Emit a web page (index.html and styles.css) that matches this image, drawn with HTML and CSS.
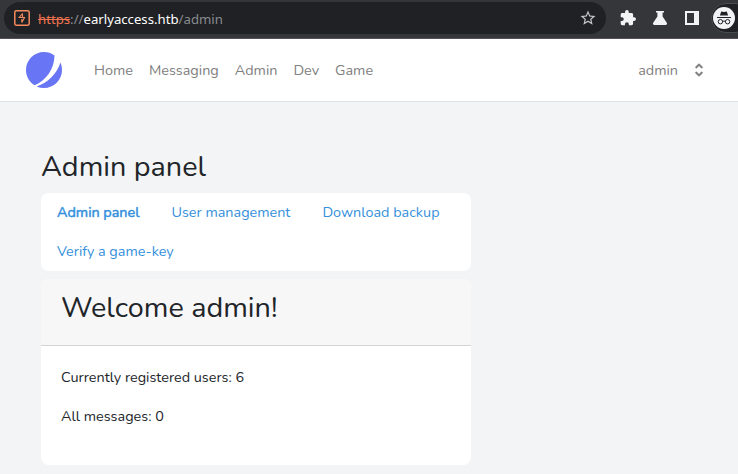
FILE: index.html
```html
<!DOCTYPE html>
<html lang="en">
<head>
<meta charset="utf-8">
<title>Admin panel</title>
<link rel="stylesheet" href="styles.css">
</head>
<body>
<div class="toolbar">
  <div class="omnibox">
    <svg class="burp" width="16" height="16" viewBox="0 0 16 16"><rect x="0.8" y="0.8" width="14.4" height="14.4" rx="1.4" fill="none" stroke="#f48b5e" stroke-width="1.500"/><path d="M8.500 3.500L5.200 7.500h5.300L7.800 12.500M8.500 3.500v4M7.800 12.500V9" fill="none" stroke="#f48b5e" stroke-width="1.100"/></svg>
    <div class="url"><span class="scheme">https</span><span class="dim">://</span>earlyaccess.htb<span class="dim">/admin</span></div>
    <svg class="star" width="18" height="18" viewBox="0 0 24 24"><path fill="#c4c7cb" d="M22 9.240l-7.190-.62L12 2 9.190 8.630 2 9.240l5.460 4.730L5.820 21 12 17.270 18.180 21l-1.630-7.030L22 9.240zM12 15.400l-3.760 2.270 1-4.280-3.320-2.880 4.380-.38L12 6.100l1.710 4.040 4.380.38-3.320 2.880 1 4.280L12 15.400z"/></svg>
  </div>
  <div class="actions">
    <svg width="16" height="16" viewBox="1 1 22 22"><path fill="#f1f3f4" d="M20.500 11H19V7c0-1.100-.9-2-2-2h-4V3.500a2.500 2.500 0 0 0-5 0V5H4c-1.100 0-2 .9-2 2v3.800h1.500a2.700 2.700 0 0 1 0 5.400H2V20c0 1.100.9 2 2 2h3.800v-1.500a2.700 2.700 0 0 1 5.400 0V22H17c1.100 0 2-.9 2-2v-4h1.500a2.500 2.500 0 0 0 0-5z"/></svg>
    <svg width="16" height="16" viewBox="0 0 16 16"><path fill="#f1f3f4" d="M4 1h8v1.500h-1.400v4l4.200 6.300c.6 1 0 2.200-1.200 2.200H2.400c-1.200 0-1.800-1.200-1.200-2.200l4.200-6.300v-4H4z"/></svg>
    <svg width="14" height="14" viewBox="0 0 14 14"><path fill="#f1f3f4" fill-rule="evenodd" d="M0 0h14v14H0zM2 2v10h7V2z"/></svg>
  </div>
  <div class="profile">
    <svg width="22" height="22" viewBox="0 0 22 22"><circle cx="11" cy="11" r="11" fill="#f1f3f4"/><path fill="#202124" d="M8.200 4.500l2.800.6 2.800-.6 1.300 4H6.900zM4 10h14v1H4z"/><g fill="none" stroke="#202124" stroke-width="1"><circle cx="7.400" cy="14.700" r="2.200"/><circle cx="14.600" cy="14.700" r="2.200"/><path d="M9.500 14.400q1.500-.8 3 0"/></g></svg>
  </div>
</div>
<nav class="nav">
  <svg class="logo" width="36" height="36" viewBox="0 0 48 48" fill="#6875f5"><path d="M11.395 44.428C4.557 40.198 0 32.632 0 24 0 10.745 10.745 0 24 0a23.891 23.891 0 0113.997 4.502c-.2 17.907-11.097 33.245-26.602 39.926z"/><path d="M14.134 45.885A23.914 23.914 0 0024 48c13.255 0 24-10.745 24-24 0-3.516-.756-6.856-2.115-9.866-4.659 15.143-16.608 27.092-31.750 31.751z"/></svg>
  <div class="links"><a>Home</a><a>Messaging</a><a>Admin</a><a>Dev</a><a>Game</a></div>
  <div class="user"><span>admin</span><svg width="18" height="18" viewBox="0 0 20 20"><path fill="#7f7f7f" stroke="#7f7f7f" stroke-width=".4" fill-rule="evenodd" d="M10 3a1 1 0 01.707.293l3 3a1 1 0 01-1.414 1.414L10 5.414 7.707 7.707a1 1 0 01-1.414-1.414l3-3A1 1 0 0110 3zm-3.707 9.293a1 1 0 011.414 0L10 14.586l2.293-2.293a1 1 0 011.414 1.414l-3 3a1 1 0 01-1.414 0l-3-3a1 1 0 010-1.414z"/></svg></div>
</nav>
<main>
  <h2>Admin panel</h2>
  <div class="tabs"><a class="active">Admin panel</a><a>User management</a><a>Download backup</a><a>Verify a game-key</a></div>
  <section class="card">
    <header><h2>Welcome admin!</h2></header>
    <div class="body"><p>Currently registered users: 6</p><p>All messages: 0</p></div>
  </section>
</main>
</body>
</html>
```
FILE: styles.css
```css
* { box-sizing: border-box; }
body { margin: 0; height: 474px; overflow: hidden; background: #f2f4f6; color: #212529; font: 14.4px/23px Nunito, Lato, sans-serif; }
svg { display: block; flex: none; }
.toolbar { height: 39px; background: #35363a; border-bottom: 1px solid #55515c; display: flex; align-items: flex-start; padding: 2px 0 0 4px; }
.omnibox { width: 602px; height: 32px; border-radius: 16px; background: #202124; display: flex; align-items: center; padding: 0 9px 0 10px; }
.url { flex: 1; margin-left: 8px; padding-top: 1px; color: #fff; font: 13.2px/20px "Noto Sans", sans-serif; white-space: nowrap; }
.scheme { color: #f07450; text-decoration: line-through; }
.dim { color: #888b90; }
.actions { height: 32px; display: flex; align-items: center; gap: 16px; margin-left: 14px; }
.actions svg:last-child { margin-left: 1px; }
.profile { width: 40px; height: 30px; margin: 1px -14px 0 12px; padding: 3px 0 0 1px; border: 1px solid #4b4c50; border-radius: 15px; background: #202124; flex: none; }
.nav { height: 63px; background: #fff; border-bottom: 1px solid #dee2e6; display: flex; align-items: center; padding: 0 30px 0 26px; color: #808080; }
.links { display: flex; gap: 16px; margin-left: 32px; }
.user { margin-left: auto; display: flex; align-items: center; gap: 12px; }
main { width: 430px; margin: 47px 0 0 41px; }
h2 { margin: 0; font-weight: 400; font-size: 28.800px; line-height: 35px; }
.tabs { height: 78px; margin-top: 9px; border-radius: 8px; background: #fff; color: #3490dc; display: flex; flex-wrap: wrap; align-content: flex-start; }
.tabs a { padding: 8px 16px; white-space: nowrap; }
.tabs .active { -webkit-text-stroke: .5px currentColor; }
.card { margin-top: 8px; height: 186px; border-radius: 8px; background: #fff; overflow: hidden; }
.card header { height: 67px; padding: 11px 20px; background: #f7f7f7; border-bottom: 1px solid #d4d4d6; }
.body { padding: 20px; }
p { margin: 0 0 16px; }
```
